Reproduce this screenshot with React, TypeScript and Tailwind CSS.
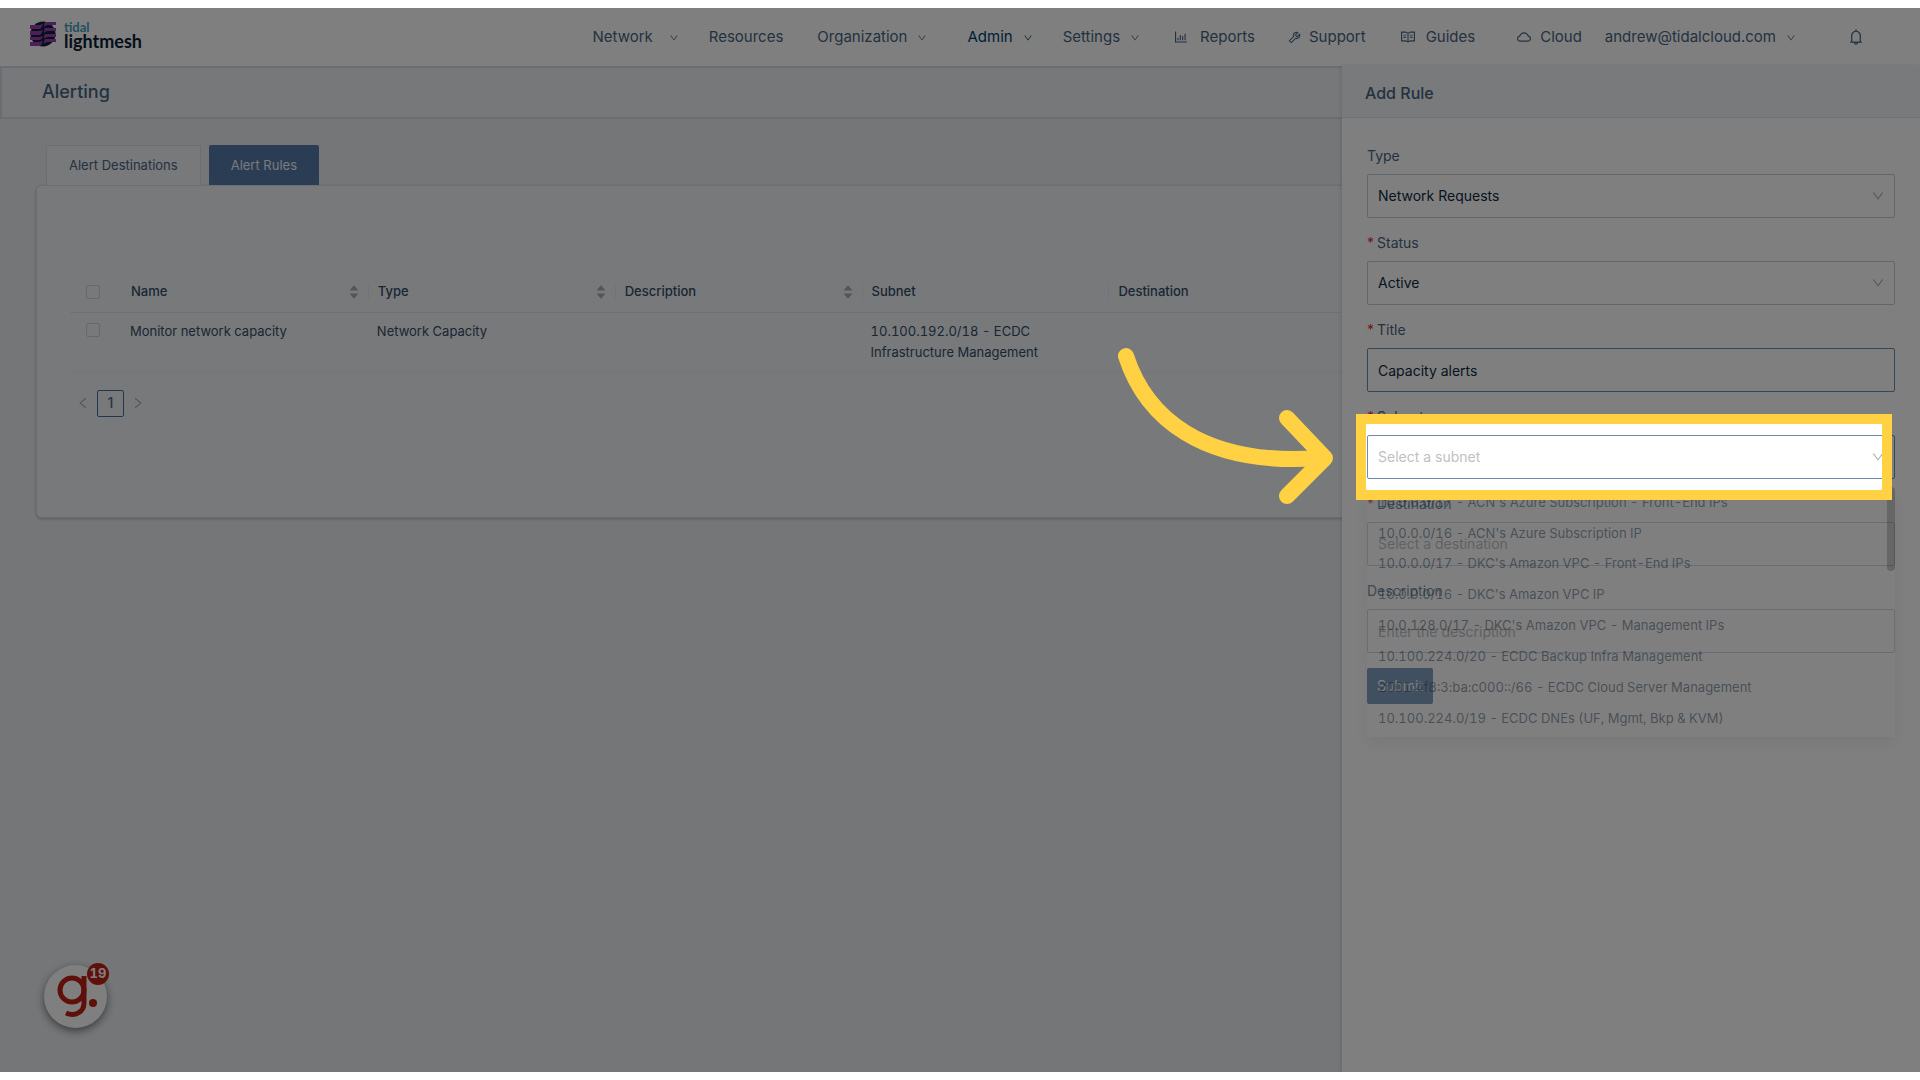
import type { ReactNode } from "react";
import {
  AiFillCaretDown,
  AiFillCaretUp,
  AiOutlineBarChart,
  AiOutlineBell,
  AiOutlineCloud,
  AiOutlineDown,
  AiOutlineLeft,
  AiOutlineRead,
  AiOutlineRight,
  AiOutlineTool,
} from "react-icons/ai";

const SUBNETS = [
  "10.0.0.0/17 - ACN's Azure Subscription - Front-End IPs",
  "10.0.0.0/16 - ACN's Azure Subscription IP",
  "10.0.0.0/17 - DKC's Amazon VPC - Front-End IPs",
  "10.0.0.0/16 - DKC's Amazon VPC IP",
  "10.0.128.0/17 - DKC's Amazon VPC - Management IPs",
  "10.100.224.0/20 - ECDC Backup Infra Management",
  "2001:4f8:3:ba:c000::/66 - ECDC Cloud Server Management",
  "10.100.224.0/19 - ECDC DNEs (UF, Mgmt, Bkp & KVM)",
];

function Logo() {
  return (
    <a href="#" className="flex items-start gap-2 font-['Lato',sans-serif]">
      <svg viewBox="0 0 26 26" className="h-[26px] w-[26px]" aria-hidden="true">
        <circle cx="13" cy="13" r="12.5" fill="#0a2036" />
        <g fill="#9a3cae">
          <path d="M15 1h11v3h-8c-2 0-3 1-4 2 0-2 0-3 1-5z" />
          <path d="M0 4h9c2 0 3-1 4-1-1 3-2 5-4 5H0z" />
          <path d="M15 7h11v3h-8c-2 0-3 1-4 2 0-2 0-3 1-5z" />
          <path d="M0 10h9c2 0 3-1 4-1-1 3-2 5-4 5H0z" />
          <path d="M15 13h11v3h-8c-2 0-3 1-4 2 0-2 0-3 1-5z" />
          <path d="M0 16h9c2 0 3-1 4-1-1 3-2 4-4 4H0z" />
          <path d="M15 18h11v3h-8c-2 0-3 1-4 2 0-2 0-3 1-5z" />
          <path d="M0 21h9c2 0 3-1 4-1-1 3-2 5-4 5H0z" />
        </g>
      </svg>
      <span className="flex flex-col">
        <span className="text-[13px] leading-[12px] font-bold text-[#4c9cc0]">tidal</span>
        <span className="text-lg leading-4 font-bold text-[#0a2036]">lightmesh</span>
      </span>
    </a>
  );
}

function NavItem({
  children,
  className,
  icon,
  arrow,
}: {
  children: ReactNode;
  className: string;
  icon?: ReactNode;
  arrow?: string;
}) {
  return (
    <a href="#" className={`flex items-center whitespace-nowrap ${className}`}>
      {icon}
      {children}
      {arrow && <AiOutlineDown className={`mt-[2px] h-[10px] w-[10px] ${arrow}`} />}
    </a>
  );
}

function Field({
  id,
  label,
  required,
  children,
}: {
  id: string;
  label: string;
  required?: boolean;
  children: ReactNode;
}) {
  return (
    <div className="mb-[15px]">
      <label htmlFor={id} className="flex h-5 items-center text-sm text-[#486581]">
        {required && <span className="mr-[3px] text-[#e12d39]">*</span>}
        {label}
      </label>
      <div className="relative mt-2">{children}</div>
    </div>
  );
}

function SelectBox({
  id,
  value,
  options,
  look,
  plain,
}: {
  id: string;
  value: string;
  options: string[];
  look: string;
  plain?: boolean;
}) {
  return (
    <>
      <select
        id={id}
        defaultValue={value}
        className={`h-11 w-full appearance-none rounded-xs border bg-white px-[10px] text-sm ${look}`}
      >
        {options.map((option) => (
          <option key={option}>{option}</option>
        ))}
      </select>
      {!plain && (
        <AiOutlineDown className="pointer-events-none absolute top-[15px] right-[10px] h-[14px] w-[14px] text-[#b0b0b0]" />
      )}
    </>
  );
}

function SubnetList() {
  return (
    <div className="absolute top-[52px] right-0 left-0 z-20 flex h-[250px] shadow-[0_8px_16px_rgba(0,0,0,0.06)]">
      <ul className="flex flex-1 flex-col bg-white/30 pb-[3px] tabular-nums">
        {SUBNETS.map((subnet) => (
          <li
            key={subnet}
            className="flex flex-1 items-center px-[11px] text-[13px] whitespace-nowrap text-[#334e68]/55"
          >
            {subnet}
          </li>
        ))}
      </ul>
      <div className="absolute top-0 right-0 h-[84px] w-2 rounded-full bg-black/20" />
    </div>
  );
}

function Spotlight() {
  return (
    <>
      <div className="pointer-events-none absolute -top-[21px] right-[3px] -bottom-[21px] -left-[11px] z-30 border-10 border-[#ffd143] shadow-[0_0_0_4000px_rgba(0,0,0,0.5)]" />
      <svg
        viewBox="0 0 220 160"
        className="pointer-events-none absolute -top-[90px] -left-[252px] z-30 h-[160px] w-[220px]"
        fill="none"
        stroke="#ffd143"
        strokeWidth="16"
        strokeLinecap="round"
        strokeLinejoin="round"
        aria-hidden="true"
      >
        <path d="M11 11C30 70 85 122 205 113" />
        <path d="M172 73l38 40-38 38" />
      </svg>
    </>
  );
}

function AddRule() {
  return (
    <aside className="absolute top-0 right-0 bottom-0 z-10 w-[578px] bg-white shadow-[-1px_0_4px_rgba(0,0,0,0.12)]">
      <h2 className="flex h-[52px] items-center border-b border-[#d9e2ec] bg-[#f0f4f8] px-[23px] pt-[2px] text-base font-medium text-[#486581]">
        Add Rule
      </h2>
      <form className="px-[25px] pt-[28px]">
        <Field id="type" label="Type">
          <SelectBox
            id="type"
            value="Network Requests"
            options={["Network Requests", "Network Capacity"]}
            look="border-[#bcccdc] text-[#102a43]"
          />
        </Field>
        <Field id="status" label="Status" required>
          <SelectBox
            id="status"
            value="Active"
            options={["Active", "Inactive"]}
            look="border-[#bcccdc] text-[#102a43]"
          />
        </Field>
        <Field id="title" label="Title" required>
          <input
            id="title"
            defaultValue="Capacity alerts"
            className="h-11 w-full rounded-xs border border-[#6b8cae] px-[10px] text-sm text-[#102a43]"
          />
        </Field>
        <Field id="subnet" label="Subnet" required>
          <SelectBox
            id="subnet"
            value="Select a subnet"
            options={["Select a subnet", ...SUBNETS]}
            look="border-[#6b8cae] text-[#bfbfbf]"
          />
          <SubnetList />
          <Spotlight />
        </Field>
        <Field id="destination" label="Destination" required>
          <SelectBox
            id="destination"
            value="Select a destination"
            options={["Select a destination"]}
            look="border-[#bcccdc] text-[#a8a8a8]"
            plain
          />
        </Field>
        <Field id="description" label="Description">
          <input
            id="description"
            placeholder="Enter the description"
            className="h-11 w-full rounded-xs border border-[#bcccdc] px-[10px] text-sm placeholder:text-[#a8a8a8]"
          />
        </Field>
        <button
          type="button"
          className="h-9 rounded-xs bg-[#4c79a9] px-[10px] text-sm text-white"
        >
          Submit
        </button>
      </form>
    </aside>
  );
}

function HeadCell({ children, sort, last }: { children: ReactNode; sort?: boolean; last?: boolean }) {
  return (
    <th className="h-10 p-0 font-medium">
      <div
        className={`flex h-4 items-center justify-between pr-[8px] pl-[9px] ${last ? "" : "border-r border-[#e4e8ec]"}`}
      >
        {children}
        {sort && (
          <span className="flex flex-col text-[#aaaaaa]">
            <AiFillCaretUp className="-mb-1 h-3 w-3" />
            <AiFillCaretDown className="h-3 w-3" />
          </span>
        )}
      </div>
    </th>
  );
}

function Tick({ label }: { label: string }) {
  return (
    <input
      type="checkbox"
      aria-label={label}
      className="block h-[14px] w-[14px] appearance-none rounded-xs border border-[#cbd2d9]"
    />
  );
}

function RulesTable() {
  return (
    <table className="w-full table-fixed border-collapse text-left text-[13px] text-[#334e68] tabular-nums">
      <colgroup>
        <col className="w-[52px]" />
        <col span={7} />
      </colgroup>
      <thead>
        <tr className="border-b border-[#dde2e7]">
          <th className="p-0 pl-4">
            <Tick label="Select all rules" />
          </th>
          <HeadCell sort>Name</HeadCell>
          <HeadCell sort>Type</HeadCell>
          <HeadCell sort>Description</HeadCell>
          <HeadCell>Subnet</HeadCell>
          <HeadCell last>Destination</HeadCell>
          <th />
          <th />
        </tr>
      </thead>
      <tbody>
        <tr className="border-b border-[#e6eaee] align-top leading-[21px]">
          <td className="pt-[10px] pl-4">
            <Tick label="Select Monitor network capacity" />
          </td>
          <td className="px-2 pt-2 pb-2">Monitor network capacity</td>
          <td className="px-2 pt-2 pb-2">Network Capacity</td>
          <td />
          <td className="px-2 pt-2 pb-2">
            10.100.192.0/18 - ECDC
            <br />
            Infrastructure Management
          </td>
          <td />
          <td />
          <td />
        </tr>
      </tbody>
    </table>
  );
}

function GuideBubble() {
  return (
    <button
      type="button"
      aria-label="Open guides"
      className="absolute bottom-[44px] left-11 h-[63px] w-[63px] rounded-full bg-white shadow-[0_3px_9px_rgba(0,0,0,0.5)]"
    >
      <svg viewBox="0 0 63 63" className="h-full w-full" fill="none" stroke="#be2015" aria-hidden="true">
        <circle cx="28" cy="25" r="12" strokeWidth="5" />
        <path d="M40 11v27c0 9-9 14-18 10" strokeWidth="5" />
        <circle cx="49" cy="38" r="4" fill="#be2015" stroke="none" />
      </svg>
      <span className="absolute -top-[2px] -right-[2px] flex h-[22px] w-[22px] items-center justify-center rounded-full bg-[#be2015] text-[13px] font-bold text-white tabular-nums">
        19
      </span>
    </button>
  );
}

export default function App() {
  return (
    <div className="flex min-h-screen flex-col bg-white py-2 font-['Inter',sans-serif]">
      <div className="relative flex flex-1 flex-col overflow-hidden bg-[#e9edf1]">
        <header className="flex h-[58px] items-start justify-between bg-white pl-[30px]">
          <div className="pt-[13px]">
            <Logo />
          </div>
          <nav className="flex h-[58px] items-center pr-[55px] text-[15px] text-[#486581]">
            <NavItem className="" arrow="ml-4">Network</NavItem>
            <NavItem className="ml-[30px]">Resources</NavItem>
            <NavItem className="ml-[34px]" arrow="ml-[10px]">Organization</NavItem>
            <NavItem className="ml-10 text-[#003e6b]" arrow="ml-[10px]">Admin</NavItem>
            <NavItem className="ml-[30px]" arrow="ml-[10px]">Settings</NavItem>
            <NavItem className="ml-[33px]" icon={<AiOutlineBarChart className="mr-[11px] h-4 w-4" />}>
              Reports
            </NavItem>
            <NavItem className="ml-8" icon={<AiOutlineTool className="mr-[7px] h-[15px] w-[15px]" />}>
              Support
            </NavItem>
            <NavItem className="ml-[34px]" icon={<AiOutlineRead className="mr-[10px] h-4 w-4" />}>
              Guides
            </NavItem>
            <NavItem className="ml-[41px]" icon={<AiOutlineCloud className="mr-2 h-4 w-4" />}>
              Cloud
            </NavItem>
            <NavItem className="ml-[23px]" arrow="ml-[10px]">andrew@tidalcloud.com</NavItem>
            <button type="button" aria-label="Notifications" className="ml-[51px]">
              <AiOutlineBell className="h-[18px] w-[18px]" />
            </button>
          </nav>
        </header>

        <div className="relative flex-1">
          <main>
            <h1 className="flex h-[53px] items-center border-2 border-[#d3dbe8] bg-[#edf0f3] px-10 pb-px text-lg font-medium text-[#486581]">
              Alerting
            </h1>
            <div className="px-9 pt-[26px]">
              <div className="flex gap-2 pl-[10px] text-[13px]">
                <button
                  type="button"
                  className="h-10 rounded-t-xs border border-b-0 border-[#d9dde3] bg-[#f0f2f5] px-[22px] pt-px text-[#486581]"
                >
                  Alert Destinations
                </button>
                <button
                  type="button"
                  className="h-10 rounded-t-xs bg-[#547aa8] px-[22px] pt-[2px] text-[#f0f4f8]"
                >
                  Alert Rules
                </button>
              </div>
              <section className="h-[333px] rounded-md border border-[#d9dde2] bg-[#f0f2f5] px-[33px] pt-[86px] shadow-[0_1px_3px_rgba(0,0,0,0.25)]">
                <RulesTable />
                <div className="mt-[18px] flex items-center gap-[7px] pl-[6px] text-[#aaaaaa]">
                  <button type="button" aria-label="Previous page">
                    <AiOutlineLeft className="block h-[14px] w-[14px]" />
                  </button>
                  <button
                    type="button"
                    className="h-[27px] w-[27px] rounded-xs border border-[#486f9b] text-sm font-medium text-[#486f9b]"
                  >
                    1
                  </button>
                  <button type="button" aria-label="Next page">
                    <AiOutlineRight className="block h-[14px] w-[14px]" />
                  </button>
                </div>
              </section>
            </div>
          </main>
          <GuideBubble />
          <AddRule />
        </div>
      </div>
    </div>
  );
}
